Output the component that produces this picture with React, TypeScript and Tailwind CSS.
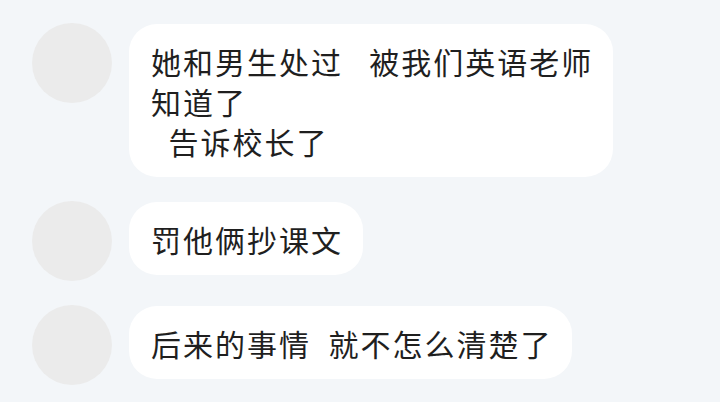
const messages: string[][] = [
  ['她和男生处过   被我们英语老师', '知道了', '  告诉校长了'],
  ['罚他俩抄课文'],
  ['后来的事情  就不怎么清楚了'],
]

function Avatar() {
  return <div className="h-[80px] w-[80px] shrink-0 rounded-full bg-[#ebebeb]" />
}

export default function App() {
  return (
    <div
      className="h-[402px] w-[720px] overflow-hidden bg-[#f3f6f9] pl-[32px] pt-[23px]"
      style={{ fontFamily: '"Noto Sans CJK SC", "Noto Sans", sans-serif' }}
    >
      <div className="flex flex-col gap-[24px]">
        {messages.map((lines, i) => (
          <div key={i} className="flex items-start gap-[17px]">
            <Avatar />
            <div className="mt-[1px] rounded-[28px] bg-white pb-[16px] pl-[22px] pr-[20px] pt-[17px] text-[30px] leading-[40px] tracking-[2px] text-[#1f1f1f]">
              {lines.map((line, j) => (
                <div key={j} className="whitespace-pre">
                  {line}
                </div>
              ))}
            </div>
          </div>
        ))}
      </div>
    </div>
  )
}
